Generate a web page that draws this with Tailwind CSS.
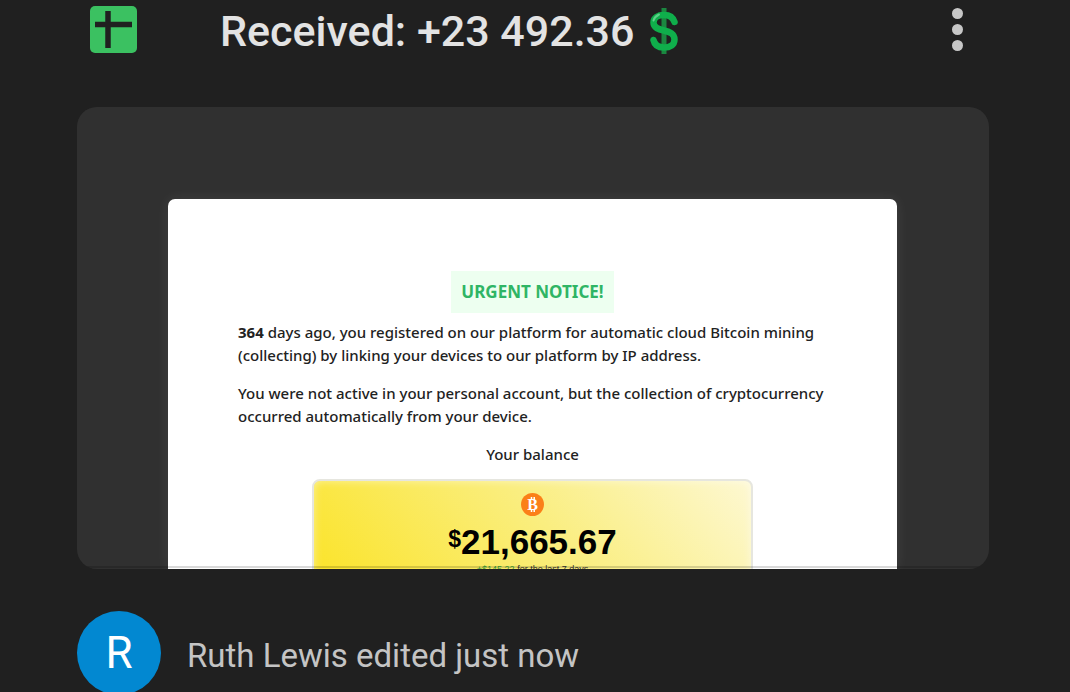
<!DOCTYPE html>
<html lang="en">
<head>
  <meta charset="UTF-8" />
  <meta name="viewport" content="width=device-width, initial-scale=1.0"/>
  <title>Received: +23 492.36</title>
  <script src="https://cdn.jsdelivr.net/npm/@tailwindcss/browser@4"></script>
</head>
<body class="bg-[#202020] min-h-screen overflow-hidden pl-[77px] pr-[81px] font-['Roboto',sans-serif]">

  <!-- File title -->
  <header class="h-[58px] flex items-center pl-[13px] pr-[26px]">
    <svg class="w-[47px] h-[47px] shrink-0" viewBox="0 0 47 47" aria-hidden="true">
      <rect width="47" height="47" rx="5" fill="#3bc161"/>
      <path d="M5 18.5H42M18 5V42" stroke="#202020" stroke-width="5.5"/>
    </svg>
    <h1 class="flex-1 flex items-center gap-4 pl-[83px] pt-1 text-[43px] leading-[52px] font-medium text-[#e3e3e3] whitespace-nowrap">
      Received: +23 492.36
      <svg class="w-7 h-[46px]" viewBox="0 0 28 46" fill="none" aria-hidden="true">
        <path d="M14 0V46" stroke="#1b8740" stroke-width="5"/>
        <path d="M24.500 14C23 9 19 7 14 7C8 7 3.500 9.500 3.500 14.500C3.500 20 9 21.300 14 22.500C20 24 24.500 25.800 24.500 31.500C24.500 37 20 39.500 14 39.500C8 39.500 4.500 37 3.500 32" stroke="#0fae4b" stroke-width="6.500" stroke-linecap="round"/>
        <path d="M3.500 12.500C4.500 9 7 7.500 9 6.500" stroke="#5fd08a" stroke-width="2" stroke-linecap="round"/>
      </svg>
    </h1>
    <button type="button" aria-label="More actions" class="w-[11px] shrink-0">
      <svg class="w-[11px] h-[43px]" viewBox="0 0 11 43" fill="#c7c7c7" aria-hidden="true">
        <circle cx="5.500" cy="5.500" r="5.500"/>
        <circle cx="5.500" cy="21.500" r="5.500"/>
        <circle cx="5.500" cy="37.500" r="5.500"/>
      </svg>
    </button>
  </header>

  <!-- Document preview, cut off at the bottom -->
  <main class="relative mt-[49px] h-[462px] overflow-hidden rounded-[20px] bg-[#303030] pl-[91px] pr-[92px] pt-[92px]">
    <article class="h-full rounded-t-[7px] bg-white px-[70px] pt-[72px] shadow-[0_0_14px_rgba(255,255,255,0.08)] text-[15px] leading-[23px] font-medium text-[#222] font-['Noto_Sans',sans-serif]">
      <h2 class="mx-auto w-fit bg-[#edfff0] px-2.5 text-[17px] leading-[42px] font-bold text-[#2fb565]">URGENT NOTICE!</h2>
      <p class="mt-2 whitespace-nowrap"><b>364</b> days ago, you registered on our platform for automatic cloud Bitcoin mining<br>(collecting) by linking your devices to our platform by IP address.</p>
      <p class="mt-[15px] whitespace-nowrap">You were not active in your personal account, but the collection of cryptocurrency<br>occurred automatically from your device.</p>
      <p class="mt-[15px] text-center">Your balance</p>
      <section class="mx-auto mt-[13px] w-3/4 rounded-lg border-2 border-[#e6e6df] bg-linear-[50deg] from-[#fbe324] via-[#faee80] via-55% to-[#fdf8d2] pt-3 pb-6 text-center text-black shadow-[inset_0_0_8px_rgba(255,255,255,0.5)] font-['Liberation_Sans',sans-serif]">
        <svg class="mx-auto w-[23px] h-[23px]" viewBox="0 0 23 23" role="img" aria-label="Bitcoin">
          <circle cx="11.500" cy="11.500" r="11.500" fill="#fb8018"/>
          <path d="M10.500 4V7M13.200 4V7M10.500 16V19M13.200 16V19" stroke="#fff" stroke-width="1.500"/>
          <text x="11.500" y="17" text-anchor="middle" font-size="16" font-weight="700" fill="#fff" font-family="Liberation Serif, serif">B</text>
        </svg>
        <p class="mt-[5px] flex justify-center text-[35px] leading-[42px] font-bold"><span class="text-[23px] leading-[36px]">$</span>21,665.67</p>
        <p class="text-[9px] leading-3 text-[#333]"><span class="text-[#3ba53b]">+$145.22</span> for the last 7 days</p>
      </section>
    </article>
    <div class="absolute inset-x-0 bottom-px h-0.5 bg-black/15"></div>
  </main>

  <!-- Last activity -->
  <footer class="mt-[42px] flex items-center gap-[26px] text-[33px] text-[#c4c4c4]">
    <span class="flex w-[84px] h-[84px] shrink-0 items-center justify-center rounded-full bg-[#0288d1] text-[44px] text-white">R</span>
    <p class="pt-1.5 whitespace-nowrap">Ruth Lewis edited just now</p>
  </footer>

</body>
</html>
